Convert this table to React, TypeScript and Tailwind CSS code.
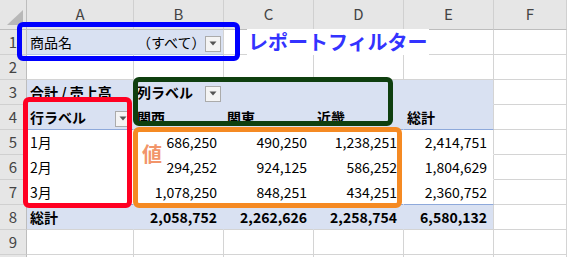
import React from 'react'

type Cell = {
  text?: string
  right?: boolean
  bold?: boolean
  pivot?: boolean
  br?: string
  bb?: string
  dd?: boolean
}

// border colour helpers (written out in full so tailwind picks them up)
const brClass: Record<string, string> = {
  grid: 'border-r-[#D4D4D4]',
  pivot: 'border-r-[#D9E1F2]',
  white: 'border-r-white',
}
const bbClass: Record<string, string> = {
  grid: 'border-b-[#D4D4D4]',
  pivot: 'border-b-[#D9E1F2]',
  white: 'border-b-white',
  blue: 'border-b-[#8EA9DB]',
  light: 'border-b-[#B4C6E7]',
}

function Dropdown() {
  return (
    <div className="ml-auto mr-[2px] mt-[3px] flex h-[16px] w-[16px] shrink-0 items-center justify-center border border-[#ABABAB] bg-[#F4F4F4]">
      <svg width="8" height="5" viewBox="0 0 8 5">
        <path d="M0.5 0.5 L7.5 0.5 L4 4.5 Z" fill="#555" />
      </svg>
    </div>
  )
}

const g = (): Cell => ({ br: 'grid', bb: 'grid' })
const p = (text?: string, bold = true, dd = false, bb = 'pivot'): Cell => ({ text, bold, pivot: true, br: 'pivot', bb, dd })
const w = (text?: string, right = true, br = 'white', bb = 'white'): Cell => ({ text, right, br, bb })
const t = (text: string): Cell => ({ text, right: true, bold: true, pivot: true, br: 'pivot', bb: 'grid' })

const rows: Cell[][] = [
  [
    { text: '商品名', pivot: true, br: 'pivot', bb: 'light' },
    { text: '（すべて）', pivot: true, br: 'grid', bb: 'light', dd: true },
    g(), g(), g(), g(),
  ],
  [g(), g(), g(), g(), g(), g()],
  [p('合計 / 売上高'), p('列ラベル', true, true), p(), p(), { ...p(), br: 'grid' }, g()],
  [
    p('行ラベル', true, true, 'blue'),
    p('関西', true, false, 'blue'),
    p('関東', true, false, 'blue'),
    p('近畿', true, false, 'blue'),
    { ...p('総計', true, false, 'blue'), br: 'grid' },
    g(),
  ],
  [w('1月', false), w('686,250'), w('490,250'), w('1,238,251'), w('2,414,751', true, 'grid'), g()],
  [w('2月', false), w('294,252'), w('924,125'), w('586,252'), w('1,804,629', true, 'grid'), g()],
  [
    w('3月', false, 'white', 'blue'),
    w('1,078,250', true, 'white', 'blue'),
    w('848,251', true, 'white', 'blue'),
    w('434,251', true, 'white', 'blue'),
    w('2,360,752', true, 'grid', 'blue'),
    g(),
  ],
  [
    { text: '総計', bold: true, pivot: true, br: 'pivot', bb: 'grid' },
    t('2,058,752'),
    t('2,262,626'),
    t('2,258,754'),
    { ...t('6,580,132'), br: 'grid' },
    g(),
  ],
  [g(), g(), g(), g(), g(), g()],
  [g(), g(), g(), g(), g(), g()],
]

export default function App() {
  return (
    <div className="relative h-[257px] w-[567px] overflow-hidden bg-white font-['Noto_Sans_CJK_JP','Noto_Sans',sans-serif] text-[14px] text-black">
      <div className="grid grid-cols-[27px_107px_90px_90px_90px_90px_1fr] grid-rows-[30px_repeat(10,25px)]">
        {/* column headers */}
        <div className="relative border-r border-b border-r-[#BDBDBD] border-b-[#BDBDBD] bg-[#E6E6E6]">
          <svg className="absolute right-[3px] bottom-[4px]" width="16" height="15" viewBox="0 0 16 15">
            <path d="M16 0 L16 15 L0 15 Z" fill="#B8B8B8" />
          </svg>
        </div>
        {['A', 'B', 'C', 'D', 'E', 'F'].map((c) => (
          <div
            key={c}
            className="flex items-center justify-center border-r border-b border-r-[#D0D0D0] border-b-[#BDBDBD] bg-[#E6E6E6] text-[15px] text-[#444]"
          >
            {c}
          </div>
        ))}

        {rows.map((row, ri) => (
          <React.Fragment key={ri}>
            {/* row number (row 10 only peeks in at the bottom, so no label) */}
            <div className="flex items-center justify-center border-r border-b border-r-[#BDBDBD] border-b-[#D0D0D0] bg-[#E6E6E6] text-[15px] text-[#444]">
              {ri < 9 ? ri + 1 : ''}
            </div>
            {row.map((cell, ci) => (
              <div
                key={ci}
                className={`flex items-center overflow-visible whitespace-nowrap border-r border-b ${brClass[cell.br ?? 'grid']} ${bbClass[cell.bb ?? 'grid']} ${
                  cell.pivot ? 'bg-[#D9E1F2]' : 'bg-white'
                } ${cell.right ? 'justify-end pr-[6px]' : 'pl-[3px]'} ${cell.bold ? 'font-bold' : ''}`}
              >
                {cell.text && <span className="pt-[1px]">{cell.text}</span>}
                {cell.dd && <Dropdown />}
              </div>
            ))}
          </React.Fragment>
        ))}
      </div>

      {/* overflow text in C1 */}
      <div className="absolute left-[247px] top-[29px] flex h-[26px] items-center bg-white px-[1px] text-[20px] font-bold leading-none text-[#3333FF]">
        レポートフィルター
      </div>

      {/* annotation frames */}
      <div className="pointer-events-none absolute left-[17px] top-[22px] h-[39px] w-[223px] rounded-[6px] border-[5px] border-[#0000FF]" />
      <div className="pointer-events-none absolute left-[133px] top-[77px] h-[49px] w-[260px] rounded-[6px] border-[5px] border-[#0F3F0F]" />
      <div className="pointer-events-none absolute left-[133px] top-[127px] h-[81px] w-[269px] rounded-[6px] border-[5px] border-[#F58A23]" />
      <div className="pointer-events-none absolute left-[23px] top-[97px] h-[111px] w-[109px] rounded-[6px] border-[5px] border-[#FF0022]" />

      <div className="absolute left-[142px] top-[144px] text-[20px] font-bold leading-none text-[#F2956A]">値</div>
    </div>
  )
}
